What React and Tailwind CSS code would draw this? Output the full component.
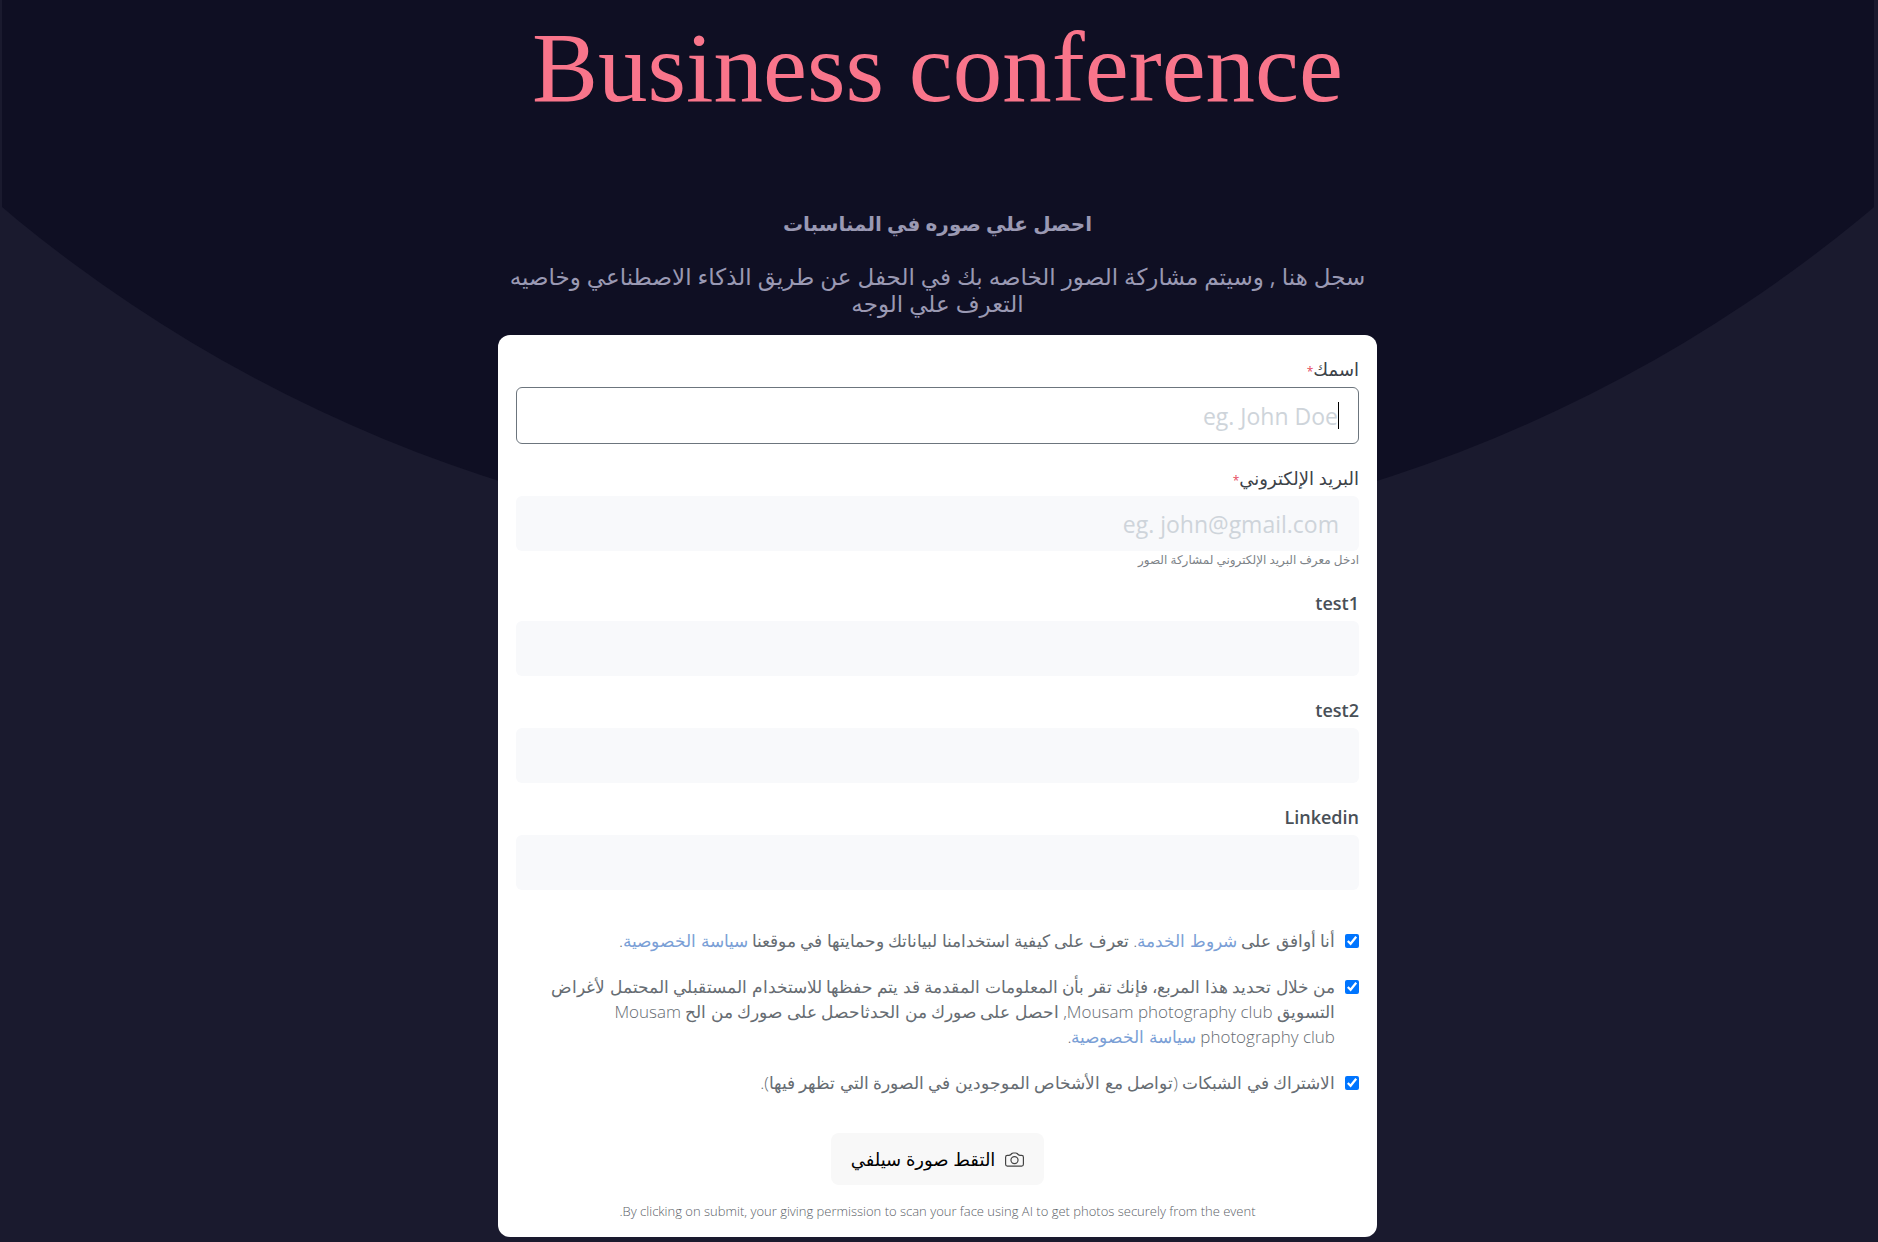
const sans = "font-['Open_Sans','Noto_Sans','DejaVu_Sans',sans-serif]";

function Field({ id, label, latin, required, type = 'text', placeholder, hint, focused }) {
  return (
    <div>
      <label
        htmlFor={id}
        className={
          latin
            ? 'mb-0.5 block text-lg leading-8 font-semibold text-[#495057]'
            : 'mb-0.5 block text-lg leading-8 font-medium text-[#3c4248]'
        }
      >
        {label}
        {required && <span className="text-xs font-normal text-[#e5485d]">*</span>}
      </label>
      <div className="relative">
        <input
          id={id}
          type={type}
          placeholder={placeholder}
          className={
            focused
              ? 'block h-[57px] w-full rounded-md border border-[#6c757d] bg-white px-5 text-[23px] outline-none placeholder:text-[#ced4da]'
              : 'block h-[55px] w-full rounded-md bg-[#f8f9fb] px-5 text-[23px] outline-none placeholder:text-[#ced4da]'
          }
        />
        {focused && <span aria-hidden="true" className="absolute top-[15px] right-5 h-[27px] w-px bg-black" />}
      </div>
      {hint && <p className="text-xs leading-[18px] text-[#7d8388]">{hint}</p>}
    </div>
  );
}

function Consent({ id, children }) {
  return (
    <div className="flex items-start gap-2.5">
      <input id={id} type="checkbox" defaultChecked className="mt-1.5 size-3.5 shrink-0 accent-[#0075ff]" />
      <label htmlFor={id} className="text-[17px] leading-[25px] font-light text-[#666c72]">
        {children}
      </label>
    </div>
  );
}

function Policy({ children }) {
  return (
    <a href="#policy" className="text-[#7b9fd6]">
      {children}
    </a>
  );
}

export default function App() {
  return (
    <div dir="rtl" className={`relative isolate min-h-screen bg-[#1a1a2e] pr-[19px] pb-1 pl-4 ${sans}`}>
      <div className="absolute right-1 left-0.5 top-0 -z-10 h-[560px] bg-[#0f0f23] [clip-path:circle(1452px_at_50%_-903px)]" />
      <main className="mx-auto max-w-[879px]">
        <header className="text-center text-[#9a99b3]">
          <h1 className="pt-2 font-['Liberation_Serif',serif] text-[99px] leading-[120px] text-[#f9758b]">
            Business conference
          </h1>
          <h2 className="mt-20 text-xl leading-8 font-bold">احصل علي صوره في المناسبات</h2>
          <p className="mt-[23px] text-[23px] leading-[27px]">
            سجل هنا , وسيتم مشاركة الصور الخاصه بك في الحفل عن طريق الذكاء الاصطناعي وخاصيه التعرف علي الوجه
          </p>
        </header>
        <form className="mt-[18px] rounded-xl bg-white px-[18px] pt-[18px] pb-4">
          <div className="flex flex-col gap-[18px]">
            <Field id="name" label="اسمك" required placeholder="eg. John Doe" focused />
            <Field
              id="email"
              label="البريد الإلكتروني"
              required
              type="email"
              placeholder="eg. john@gmail.com"
              hint="ادخل معرف البريد الإلكتروني لمشاركة الصور"
            />
            <Field id="test1" label="test1" latin />
            <Field id="test2" label="test2" latin />
            <Field id="linkedin" label="Linkedin" latin />
          </div>
          <div className="mt-[38px] flex flex-col gap-[21px]">
            <Consent id="terms">
              أنا أوافق على <Policy>شروط الخدمة</Policy>. تعرف على كيفية استخدامنا لبياناتك وحمايتها في موقعنا{' '}
              <Policy>سياسة الخصوصية</Policy>.
            </Consent>
            <Consent id="marketing">
              من خلال تحديد هذا المربع، فإنك تقر بأن المعلومات المقدمة قد يتم حفظها للاستخدام المستقبلي المحتمل لأغراض
              التسويق Mousam photography club, احصل على صورك من الحدثاحصل على صورك من الح Mousam photography club{' '}
              <Policy>سياسة الخصوصية</Policy>.
            </Consent>
            <Consent id="network">الاشتراك في الشبكات (تواصل مع الأشخاص الموجودين في الصورة التي تظهر فيها).</Consent>
          </div>
          <button
            type="button"
            className="mx-auto mt-[38px] flex h-[52px] items-center gap-2.5 rounded-lg bg-[#f8f8f8] px-5 text-lg text-black"
          >
            <svg viewBox="0 0 16 16" className="size-[19px] fill-[#444]" aria-hidden="true">
              <path d="M15 12a1 1 0 0 1-1 1H2a1 1 0 0 1-1-1V6a1 1 0 0 1 1-1h1.172a3 3 0 0 0 2.12-.879l.83-.828A1 1 0 0 1 6.827 3h2.344a1 1 0 0 1 .707.293l.828.828A3 3 0 0 0 12.828 5H14a1 1 0 0 1 1 1zM2 4a2 2 0 0 0-2 2v6a2 2 0 0 0 2 2h12a2 2 0 0 0 2-2V6a2 2 0 0 0-2-2h-1.172a2 2 0 0 1-1.414-.586l-.828-.828A2 2 0 0 0 9.172 2H6.828a2 2 0 0 0-1.414.586l-.828.828A2 2 0 0 1 3.172 4z" />
              <path d="M8 11a2.5 2.5 0 1 1 0-5 2.5 2.5 0 0 1 0 5m0 1a3.5 3.5 0 1 0 0-7 3.5 3.5 0 0 0 0 7" />
            </svg>
            التقط صورة سيلفي
          </button>
          <p className="mt-4 text-center text-[13px] leading-5 font-light text-[#5c6268]">
            By clicking on submit, your giving permission to scan your face using AI to get photos securely from the
            event.
          </p>
        </form>
      </main>
    </div>
  );
}
